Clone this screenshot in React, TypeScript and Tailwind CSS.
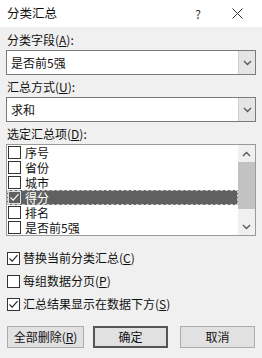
import React from "react";

const font = { fontFamily: '"Noto Sans CJK SC", "Noto Sans", sans-serif' };

function Chevron({ up = false }: { up?: boolean }) {
  return (
    <svg width="9" height="6" viewBox="0 0 9 6" className={up ? "rotate-180" : ""}>
      <path d="M1 1 L4.5 4.5 L8 1" fill="none" stroke="#555" strokeWidth="1.3" />
    </svg>
  );
}

function Box({ checked, dark = false }: { checked: boolean; dark?: boolean }) {
  return (
    <div
      className={`w-[13px] h-[13px] border shrink-0 flex items-center justify-center ${
        dark ? "border-[#e0e0e0] bg-[#606060]" : "border-[#333] bg-white"
      }`}
    >
      {checked && (
        <svg width="11" height="11" viewBox="0 0 11 11">
          <path d="M1.5 5.5 L4.2 8.2 L9.5 2.2" fill="none" stroke={dark ? "#fff" : "#222"} strokeWidth="1.1" />
        </svg>
      )}
    </div>
  );
}

function Combo({ value }: { value: string }) {
  return (
    <div className="mx-[6px] h-[25px] border border-[#7a7a7a] bg-white flex items-center">
      <div className="flex-1 pl-[4px] text-[12px] text-[#111]">{value}</div>
      <div className="w-[17px] h-[23px] bg-[#e5e5e5] border-l border-[#cfcfcf] flex items-center justify-center">
        <Chevron />
      </div>
    </div>
  );
}

const items = [
  { t: "序号", c: false },
  { t: "省份", c: false },
  { t: "城市", c: false },
  { t: "得分", c: true, sel: true },
  { t: "排名", c: false },
  { t: "是否前5强", c: false },
];

export default function App() {
  return (
    <div style={font} className="w-[262px] h-[358px] bg-[#f0f0f0] text-[#111] text-[12px] overflow-hidden flex flex-col">
      <div className="h-[27px] bg-white flex items-center pl-[7px] shrink-0">
        <span className="flex-1 text-[12.5px]">分类汇总</span>
        <span className="text-[12px] text-[#333]">?</span>
        <div className="ml-[31px] mr-[19px] flex">
          <svg width="11" height="11" viewBox="0 0 11 11">
            <path d="M0.5 0.5 L10.5 10.5 M10.5 0.5 L0.5 10.5" stroke="#333" strokeWidth="1" />
          </svg>
        </div>
      </div>
      <div className="pl-[7px] h-[23px] flex items-end pb-[1px]">
        <span>
          分类字段(<span className="underline">A</span>):
        </span>
      </div>
      <Combo value="是否前5强" />
      <div className="pl-[7px] h-[22px] flex items-end pb-[1px]">
        <span>
          汇总方式(<span className="underline">U</span>):
        </span>
      </div>
      <Combo value="求和" />
      <div className="pl-[7px] h-[22px] flex items-end pb-[1px]">
        <span>
          选定汇总项(<span className="underline">D</span>):
        </span>
      </div>
      <div className="mx-[6px] h-[92px] border border-[#9a9a9a] bg-white flex">
        <div className="flex-1 flex flex-col">
          {items.map((it) => (
            <div
              key={it.t}
              className={`h-[15px] leading-[15px] overflow-hidden flex items-center gap-[4px] pl-[1px] ${
                it.sel ? "bg-[#606060] text-white outline outline-1 outline-dashed outline-[#c8c8c8] -outline-offset-1" : ""
              }`}
            >
              <Box checked={it.c} dark={it.sel} />
              <span className="text-[12px] leading-[15px]">{it.t}</span>
            </div>
          ))}
        </div>
        <div className="w-[17px] bg-[#f0f0f0] flex flex-col">
          <div className="h-[17px] flex items-center justify-center">
            <Chevron up />
          </div>
          <div className="h-[47px] bg-[#c2c2c2]" />
          <div className="flex-1" />
          <div className="h-[17px] flex items-center justify-center">
            <Chevron />
          </div>
        </div>
      </div>
      <div className="h-[15px]" />
      <div className="flex flex-col gap-[9px] pl-[7px]">
        <div className="h-[14px] flex items-center gap-[3px]">
          <Box checked />
          <span>
            替换当前分类汇总(<span className="underline">C</span>)
          </span>
        </div>
        <div className="h-[14px] flex items-center gap-[3px]">
          <Box checked={false} />
          <span>
            每组数据分页(<span className="underline">P</span>)
          </span>
        </div>
        <div className="h-[14px] flex items-center gap-[3px]">
          <Box checked />
          <span>
            汇总结果显示在数据下方(<span className="underline">S</span>)
          </span>
        </div>
      </div>
      <div className="flex pl-[7px] mt-[15px] gap-[9px]">
        <div className="w-[77px] h-[22px] border border-[#adadad] bg-[#e1e1e1] flex items-center justify-center">
          全部删除(<span className="underline">R</span>)
        </div>
        <div className="w-[75px] h-[22px] border-2 border-[#555] bg-[#e1e1e1] flex items-center justify-center">
          确定
        </div>
        <div className="ml-[3px] w-[75px] h-[22px] border border-[#adadad] bg-[#e1e1e1] flex items-center justify-center">
          取消
        </div>
      </div>
    </div>
  );
}
